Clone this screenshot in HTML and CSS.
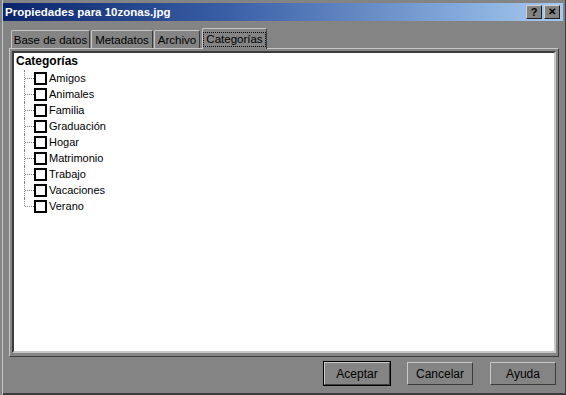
FILE: index.html
```html
<!DOCTYPE html>
<html lang="es">
<head>
    <meta charset="UTF-8">
    <title>Propiedades para 10zonas.jpg</title>
    <link rel="stylesheet" href="styles.css">
</head>
<body>
    <div class="window">
        <div class="titlebar">
            <span class="title">Propiedades para 10zonas.jpg</span>
            <div class="caption-buttons">
                <span class="caption-btn">?</span>
                <span class="caption-btn close">&#x2715;</span>
            </div>
        </div>

        <div class="dialog">
            <div class="tabs">
                <span class="tab tab-base">Base de datos</span>
                <span class="tab tab-meta">Metadatos</span>
                <span class="tab tab-file">Archivo</span>
                <span class="tab tab-cat active"><span class="focus">Categorías</span></span>
            </div>

            <div class="panel">
                <div class="list">
                    <div class="root">Categorías</div>
                    <div class="children">
                        <div class="node"><span class="check"></span>Amigos</div>
                        <div class="node"><span class="check"></span>Animales</div>
                        <div class="node"><span class="check"></span>Familia</div>
                        <div class="node"><span class="check"></span>Graduación</div>
                        <div class="node"><span class="check"></span>Hogar</div>
                        <div class="node"><span class="check"></span>Matrimonio</div>
                        <div class="node"><span class="check"></span>Trabajo</div>
                        <div class="node"><span class="check"></span>Vacaciones</div>
                        <div class="node"><span class="check"></span>Verano</div>
                    </div>
                </div>
            </div>

            <div class="actions">
                <span class="btn default">Aceptar</span>
                <span class="btn">Cancelar</span>
                <span class="btn">Ayuda</span>
            </div>
        </div>
    </div>
</body>
</html>
```

FILE: styles.css
```css
* {
    margin: 0;
    padding: 0;
    box-sizing: border-box;
}

body {
    font-family: 'Liberation Sans', Arial, sans-serif;
    font-size: 11px;
    color: #000;
    background: #848484;
}

.window {
    width: 566px;
    height: 395px;
    background: #848484;
    border-left: 2px solid #848484;
    padding: 3px 3px 0 1px;
    box-shadow: inset 1px 0 0 #c4c4c4, inset 0 -2px 0 #3c3c3c, inset -1px 0 0 #3c3c3c;
    display: flex;
    flex-direction: column;
}

/* Title bar */
.titlebar {
    height: 18px;
    background: linear-gradient(90deg, #0a246a 0%, #3a5fa6 40%, #a6caf0 100%);
    display: flex;
    align-items: center;
    justify-content: space-between;
    padding: 0 3px 0 2px;
}

.title {
    color: #fff;
    font-weight: bold;
    font-size: 11.5px;
}

.caption-buttons {
    display: flex;
    gap: 2px;
}

.caption-btn {
    width: 16px;
    height: 14px;
    background: #848484;
    border: 1px solid;
    border-color: #d0d0d0 #202020 #202020 #d0d0d0;
    display: flex;
    align-items: center;
    justify-content: center;
    font-weight: bold;
    font-size: 11px;
    line-height: 1;
}

.caption-btn.close {
    font-size: 10px;
}

/* Dialog body */
.dialog {
    flex: 1;
    display: flex;
    flex-direction: column;
    padding: 7px 4px 0 6px;
}

.tabs {
    display: flex;
    align-items: flex-end;
    height: 20px;
    padding-left: 2px;
    gap: 1px;
}

.tab {
    height: 18px;
    border: 1px solid;
    border-bottom: none;
    border-color: #c8c8c8 #3c3c3c #3c3c3c #c8c8c8;
    border-radius: 2px 2px 0 0;
    display: flex;
    align-items: center;
    justify-content: center;
    padding-top: 1px;
    font-size: 11.5px;
}

.tab-base { width: 79px; }
.tab-meta { width: 62px; }
.tab-file { width: 46px; }
.tab-cat { width: 65px; }

.tab.active {
    height: 21px;
    margin-bottom: -1px;
    margin-left: 1px;
    background: #848484;
    position: relative;
    z-index: 1;
}

.focus {
    outline: 1px dotted #000;
    outline-offset: 0;
    padding: 0 2px;
    line-height: 13px;
}

.panel {
    height: 309px;
    border: 1px solid;
    border-color: #c8c8c8 #3c3c3c #3c3c3c #c8c8c8;
    padding: 2px 2px 3px 2px;
}

.list {
    height: 100%;
    background: #fff;
    border: 2px solid;
    border-color: #3c3c3c #c8c8c8 #c8c8c8 #3c3c3c;
    padding: 0 0 0 2px;
}

.root {
    height: 17px;
    line-height: 17px;
    font-weight: bold;
    font-size: 12px;
}

.children {
    margin-left: 8px;
}

.node {
    position: relative;
    height: 16px;
    display: flex;
    align-items: center;
    padding-left: 10px;
}

.node::before {
    content: "";
    position: absolute;
    left: 0;
    top: 0;
    bottom: 0;
    border-left: 1px dotted #808080;
}

.node:last-child::before {
    bottom: 8px;
}

.node::after {
    content: "";
    position: absolute;
    left: 1px;
    top: 8px;
    width: 9px;
    border-top: 1px dotted #808080;
}

.check {
    width: 13px;
    height: 13px;
    border: 2px solid #000;
    background: #fff;
    margin-right: 2px;
}

.actions {
    display: flex;
    justify-content: flex-end;
    gap: 17px;
    padding: 5px 3px 0 0;
}

.btn {
    width: 66px;
    height: 23px;
    border: 1px solid;
    border-color: #c8c8c8 #3c3c3c #3c3c3c #c8c8c8;
    display: flex;
    align-items: center;
    justify-content: center;
    font-size: 12px;
}

.btn.default {
    outline: 1px solid #000;
    outline-offset: 0;
}
```
